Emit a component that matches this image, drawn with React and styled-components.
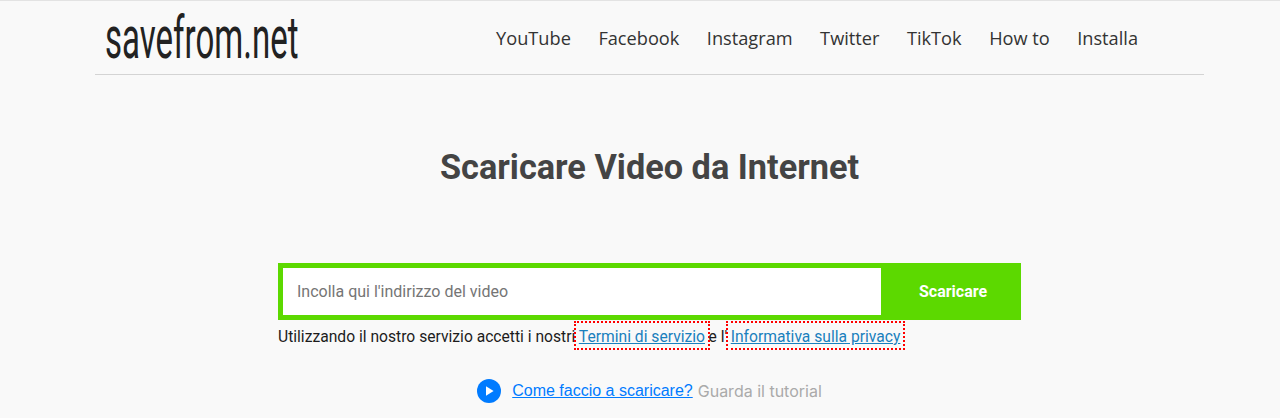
import React from "react";
import styled, { createGlobalStyle } from "styled-components";

const GlobalStyle = createGlobalStyle`
  html, body {
    margin: 0;
    padding: 0;
    height: 418px;
    overflow: hidden;
    background: #f9f9f9;
  }
`;

const navLinks = ["YouTube", "Facebook", "Instagram", "Twitter", "TikTok", "How to", "Installa"];

const App = () => (
  <Page>
    <GlobalStyle />
    <Header>
      <LogoBox>
        <Logo>savefrom.net</Logo>
      </LogoBox>
      <Nav>
        {navLinks.map((link) => (
          <NavLink key={link} href="#">
            {link}
          </NavLink>
        ))}
      </Nav>
    </Header>
    <Title>Scaricare Video da Internet</Title>
    <Main>
      <SearchForm>
        <UrlInput placeholder="Incolla qui l'indirizzo del video" />
        <SubmitButton type="button">Scaricare</SubmitButton>
      </SearchForm>
      <Terms>
        <span>Utilizzando il nostro servizio accetti i nostri</span>
        <TermsLink href="#">Termini di servizio</TermsLink>
        <span>e l'</span>
        <TermsLink href="#">Informativa sulla privacy</TermsLink>
      </Terms>
      <Tutorial>
        <PlayIcon viewBox="0 0 24 24" aria-hidden="true">
          <circle cx="12" cy="12" r="12" fill="#007bff" />
          <path d="M9 7.2v9.6l7.6-4.8z" fill="#fff" />
        </PlayIcon>
        <TutorialLink href="#">Come faccio a scaricare?</TutorialLink>
        <TutorialHint>Guarda il tutorial</TutorialHint>
      </Tutorial>
    </Main>
  </Page>
);

const Page = styled.div`
  height: 418px;
  box-sizing: border-box;
  border-top: 1px solid #e3e3e3;
  padding-left: 19px;
  display: flex;
  flex-direction: column;
  align-items: center;
  background: #f9f9f9;
`;

const Header = styled.header`
  width: 1109px;
  height: 74px;
  flex-shrink: 0;
  box-sizing: border-box;
  border-bottom: 1px solid #d4d4d4;
  display: flex;
  align-items: center;
  justify-content: space-between;
  padding: 0 66px 0 10px;
`;

const LogoBox = styled.a`
  display: block;
  width: 192px;
  height: 60px;
  overflow: visible;
`;

const Logo = styled.span`
  display: block;
  width: 360px;
  font-family: Roboto, sans-serif;
  font-weight: 400;
  font-size: 59px;
  line-height: 60px;
  color: #222;
  white-space: nowrap;
  transform: scaleX(0.56);
  transform-origin: left center;
`;

const Nav = styled.nav`
  display: flex;
  gap: 27.5px;
`;

const NavLink = styled.a`
  font-family: "Open Sans", sans-serif;
  font-size: 18.2px;
  line-height: 26px;
  color: #333;
  text-decoration: none;
`;

const Title = styled.h1`
  margin: 69px 0 0;
  font-family: Roboto, sans-serif;
  font-weight: 700;
  font-size: 34.3px;
  line-height: 46px;
  color: #444;
  text-align: center;
`;

const Main = styled.main`
  width: 743px;
  margin-top: 73px;
  display: flex;
  flex-direction: column;
`;

const SearchForm = styled.form`
  display: flex;
  height: 57px;
  box-sizing: border-box;
  border: 5px solid #5cd900;
  background: #5cd900;
`;

const UrlInput = styled.input`
  width: 598px;
  box-sizing: border-box;
  border: 0;
  outline: 0;
  padding: 0 14px;
  background: #fff;
  font-family: Roboto, sans-serif;
  font-size: 16px;
  color: #333;

  &::placeholder {
    color: #757575;
    opacity: 1;
  }
`;

const SubmitButton = styled.button`
  flex: 1;
  border: 0;
  padding: 0 0 0 9px;
  background: transparent;
  color: #fff;
  font-family: Roboto, sans-serif;
  font-weight: 700;
  font-size: 16px;
`;

const Terms = styled.p`
  margin: 2px 0 0;
  display: flex;
  align-items: flex-start;
  height: 28px;
  font-family: Roboto, sans-serif;
  font-size: 15.65px;
  line-height: 30px;
  color: #1c1c1c;
  white-space: pre;
`;

const TermsLink = styled.a`
  padding: 0 3.5px;
  height: 27px;
  box-sizing: border-box;
  outline: 2px dotted #ff0000;
  outline-offset: -1px;
  color: #1a80bd;
`;

const Tutorial = styled.div`
  margin-top: 28px;
  display: flex;
  align-items: center;
  justify-content: center;
  gap: 5px;
  font-size: 16px;
  line-height: 26px;
`;

const PlayIcon = styled.svg`
  width: 24px;
  height: 24px;
  margin-right: 6px;
`;

const TutorialLink = styled.a`
  font-family: "Liberation Sans", Arial, sans-serif;
  color: #007bff;
  text-decoration: underline;
`;

const TutorialHint = styled.span`
  font-family: Inter, sans-serif;
  color: #aaa;
`;

export default App;
